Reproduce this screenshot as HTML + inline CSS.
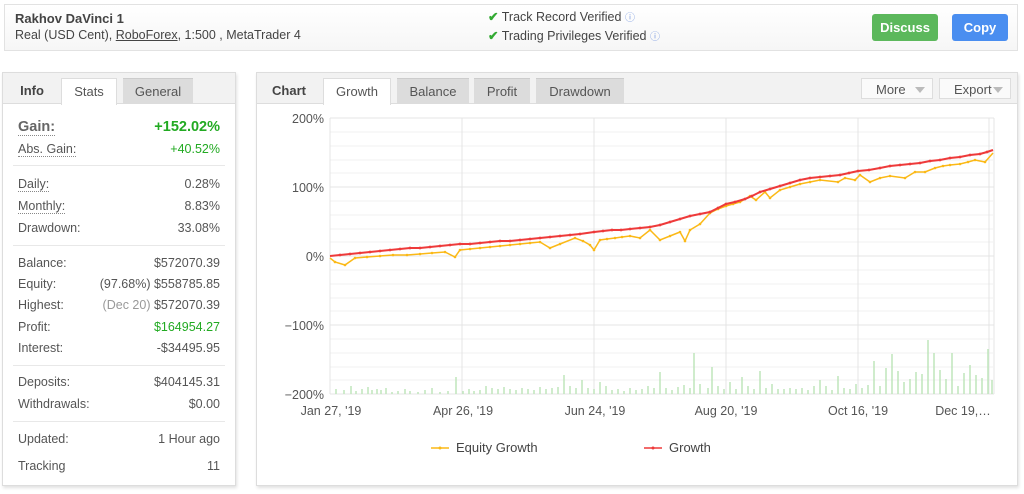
<!DOCTYPE html>
<html><head><meta charset="utf-8"><style>
*{box-sizing:border-box;margin:0;padding:0}
body{width:1024px;height:494px;background:#fff;font-family:"Liberation Sans",sans-serif;color:#555;position:relative;overflow:hidden;font-size:12px}
.abs{position:absolute}
.hdr{left:4px;top:4px;width:1014px;height:47px;border:1px solid #e2e2e2;background:linear-gradient(#fff,#f6f6f6)}
.panel{border:1px solid #ddd;background:#fff;box-shadow:1px 2px 3px rgba(0,0,0,.12)}
.tabbar{position:absolute;left:0;top:0;right:0;height:31px;background:#f2f2f2;border-bottom:1px solid #ddd}
.tab{position:absolute;top:5px;height:26px;line-height:26px;text-align:center;font-size:13px;color:#555}
.tab.on{background:#fff;border:1px solid #ddd;border-bottom:none;height:27px}
.tab.off{background:#dcdcdc;border-top:1px solid #ccc}
.row{position:absolute;left:15px;right:15px;font-size:12.5px;color:#555}
.row .r{position:absolute;right:0;top:0}
.sep{position:absolute;left:10px;right:10px;height:1px;background:#e8e8e8}
.dot{border-bottom:1px dotted #888}
.btn{position:absolute;top:14px;height:27px;line-height:27px;color:#fff;font-weight:bold;font-size:13px;text-align:center;border-radius:3px}
.dd{position:absolute;top:5px;height:21px;line-height:21px;border:1px solid #ddd;background:#fafafa;font-size:13px;color:#555;padding-left:14px}
.dd:after{content:"";position:absolute;right:7px;top:8px;border-left:5px solid transparent;border-right:5px solid transparent;border-top:6px solid #bbb}
</style></head><body>
<div class="abs hdr"></div>
<div class="abs" style="left:15px;top:11px;font-weight:bold;font-size:13px;color:#444">Rakhov DaVinci 1</div>
<div class="abs" style="left:15px;top:28px;font-size:12.5px;color:#444">Real (USD Cent), <u>RoboForex</u>, 1:500 , MetaTrader 4</div>
<div class="abs" style="left:488px;top:9px;font-size:12.5px;color:#444"><span style="color:#3a3;font-weight:bold">✔</span> Track Record Verified <span style="color:#7a9ae0;font-size:10px">ⓘ</span></div>
<div class="abs" style="left:488px;top:28px;font-size:12.5px;color:#444"><span style="color:#3a3;font-weight:bold">✔</span> Trading Privileges Verified <span style="color:#7a9ae0;font-size:10px">ⓘ</span></div>
<div class="btn" style="left:872px;width:66px;background:#5cb85c">Discuss</div>
<div class="btn" style="left:952px;width:56px;background:#4a8ef0">Copy</div>

<div class="abs panel" style="left:2px;top:72px;width:234px;height:414px">
 <div class="tabbar"></div>
 <div class="tab" style="left:4px;width:50px;font-weight:bold;color:#444">Info</div>
 <div class="tab on" style="left:58px;width:56px">Stats</div>
 <div class="tab off" style="left:120px;width:70px">General</div>
 <div class="row" style="top:46px;font-size:14.5px;font-weight:bold;color:#666"><span class="dot">Gain:</span><span class="r" style="color:#2a2">+152.02%</span></div>
 <div class="row" style="top:69px"><span class="dot">Abs. Gain:</span><span class="r" style="color:#2a2">+40.52%</span></div>
 <div class="sep" style="top:92px"></div>
 <div class="row" style="top:104px"><span class="dot">Daily:</span><span class="r">0.28%</span></div>
 <div class="row" style="top:126px"><span class="dot">Monthly:</span><span class="r">8.83%</span></div>
 <div class="row" style="top:148px">Drawdown:<span class="r">33.08%</span></div>
 <div class="sep" style="top:172px"></div>
 <div class="row" style="top:183px">Balance:<span class="r">$572070.39</span></div>
 <div class="row" style="top:204px">Equity:<span class="r">(97.68%) $558785.85</span></div>
 <div class="row" style="top:225px">Highest:<span class="r"><span style="color:#999">(Dec 20)</span> $572070.39</span></div>
 <div class="row" style="top:247px">Profit:<span class="r" style="color:#2a2">$164954.27</span></div>
 <div class="row" style="top:268px">Interest:<span class="r">-$34495.95</span></div>
 <div class="sep" style="top:292px"></div>
 <div class="row" style="top:302px">Deposits:<span class="r">$404145.31</span></div>
 <div class="row" style="top:324px">Withdrawals:<span class="r">$0.00</span></div>
 <div class="sep" style="top:348px"></div>
 <div class="row" style="top:359px">Updated:<span class="r">1 Hour ago</span></div>
 <div class="row" style="top:386px">Tracking<span class="r">11</span></div>
</div>

<div class="abs panel" style="left:256px;top:72px;width:762px;height:414px">
 <div class="tabbar"></div>
 <div class="tab" style="left:4px;width:56px;font-weight:bold;color:#444">Chart</div>
 <div class="tab on" style="left:66px;width:68px">Growth</div>
 <div class="tab off" style="left:140px;width:72px">Balance</div>
 <div class="tab off" style="left:217px;width:56px">Profit</div>
 <div class="tab off" style="left:279px;width:88px">Drawdown</div>
 <div class="dd" style="left:604px;width:72px">More</div>
 <div class="dd" style="left:682px;width:72px">Export</div>
</div>

<svg class="abs" style="left:0;top:0" width="1024" height="494">
<defs>
<marker id="my" markerWidth="3" markerHeight="3" refX="1.5" refY="1.5" markerUnits="userSpaceOnUse"><circle cx="1.5" cy="1.5" r="1.3" fill="#fbb917"/></marker>
<marker id="mr" markerWidth="3" markerHeight="3" refX="1.5" refY="1.5" markerUnits="userSpaceOnUse"><circle cx="1.5" cy="1.5" r="1.4" fill="#ee3a3a"/></marker>
</defs>
<g stroke="#f0f0f0" stroke-width="1">
<line x1="330" y1="132" x2="993" y2="132"/><line x1="330" y1="146" x2="993" y2="146"/><line x1="330" y1="160" x2="993" y2="160"/><line x1="330" y1="173" x2="993" y2="173"/>
<line x1="330" y1="201" x2="993" y2="201"/><line x1="330" y1="215" x2="993" y2="215"/><line x1="330" y1="229" x2="993" y2="229"/><line x1="330" y1="242" x2="993" y2="242"/>
<line x1="330" y1="270" x2="993" y2="270"/><line x1="330" y1="284" x2="993" y2="284"/><line x1="330" y1="298" x2="993" y2="298"/><line x1="330" y1="311" x2="993" y2="311"/>
<line x1="330" y1="339" x2="993" y2="339"/><line x1="330" y1="353" x2="993" y2="353"/><line x1="330" y1="367" x2="993" y2="367"/><line x1="330" y1="380" x2="993" y2="380"/>
</g>
<g stroke="#e4e4e4" stroke-width="1">
<line x1="330" y1="118" x2="994" y2="118"/><line x1="330" y1="187" x2="994" y2="187"/><line x1="330" y1="256" x2="994" y2="256"/><line x1="330" y1="325" x2="994" y2="325"/><line x1="330" y1="394" x2="994" y2="394"/>
<line x1="330" y1="118" x2="330" y2="394"/><line x1="462" y1="118" x2="462" y2="394"/><line x1="594" y1="118" x2="594" y2="394"/><line x1="726" y1="118" x2="726" y2="394"/><line x1="858" y1="118" x2="858" y2="394"/><line x1="989" y1="118" x2="989" y2="394"/><line x1="994" y1="118" x2="994" y2="394"/>
</g>
<g stroke="#bfe6bb" stroke-width="1.5">
<path d="M336 394v-5M344 394v-4M351 394v-8M356 394v-3M362 394v-5M368 394v-7M372 394v-4M377 394v-5M381 394v-4M386 394v-6M392 394v-2M398 394v-3M405 394v-5M410 394v-3M418 394v-2M425 394v-4M432 394v-6M440 394v-2M448 394v-3M456 394v-17M463 394v-3M469 394v-5M474 394v-3M480 394v-4M486 394v-8M492 394v-6M498 394v-5M504 394v-7M510 394v-5M516 394v-4M522 394v-6M528 394v-5M534 394v-4M540 394v-7M546 394v-5M552 394v-6M558 394v-7M564 394v-19M570 394v-8M576 394v-6M582 394v-14M588 394v-6M594 394v-5M600 394v-12M606 394v-8M612 394v-4M618 394v-5M624 394v-3M630 394v-6M636 394v-4M642 394v-5M648 394v-8M654 394v-6M660 394v-22M666 394v-6M672 394v-4M678 394v-7M684 394v-9M690 394v-6M694 394v-41M700 394v-10M708 394v-6M712 394v-27M718 394v-8M724 394v-5M730 394v-12M736 394v-5M742 394v-17M748 394v-8M754 394v-5M760 394v-23M766 394v-6M772 394v-10M778 394v-5M784 394v-5M790 394v-6M796 394v-5M802 394v-6M808 394v-4M814 394v-8M820 394v-14M826 394v-8M832 394v-4M838 394v-18M844 394v-6M850 394v-5M856 394v-10M862 394v-6M868 394v-9M874 394v-33M880 394v-8M886 394v-26M892 394v-40M898 394v-23M904 394v-12M910 394v-15M916 394v-22M922 394v-20M928 394v-54M934 394v-41M940 394v-24M946 394v-15M952 394v-41M958 394v-8M964 394v-21M970 394v-29M976 394v-19M982 394v-16M988 394v-45M992 394v-14"/>
</g>
<polyline fill="none" stroke="#fbb917" stroke-width="1.5" marker-mid="url(#my)" points="330,258 335,262 345,265 355,258 367,257 380,256 393,255 407,255 420,254 432,253 445,252 455,257 460,250 470,249 480,248 490,247 500,246 510,245 520,244 530,243 540,242 550,248 560,244 575,238 583,241 590,245 594,250 600,240 607,239 615,238 622,237 630,236 640,238 650,230 660,240 670,236 680,232 685,241 690,230 700,224 710,213 718,209 726,206 733,204 740,202 750,196 756,200 765,192 770,198 780,190 790,187 800,184 810,182 820,180 838,182 845,178 855,180 860,175 870,182 880,178 890,176 905,178 915,172 925,172 935,168 943,166 950,165 960,164 968,162 975,160 985,162 993,153"/>
<polyline fill="none" stroke="#ee3a3a" stroke-width="2" marker-mid="url(#mr)" points="330,256 340,255 350,254 360,253 370,252 380,251 390,250 400,249 410,248 420,248 430,247 440,246 450,245 460,244 470,244 480,243 490,242 500,241 510,241 520,240 530,239 540,238 550,237 560,236 570,235 580,234 594,232 603,231 612,230 621,230 630,229 640,228 650,227 660,225 670,222 680,219 690,216 700,214 710,212 718,208 726,204 735,202 745,199 752,196 760,192 770,189 780,186 790,183 800,180 810,178 820,177 830,176 840,175 849,173 858,171 869,170 880,168 890,166 900,165 910,164 920,163 930,161 940,160 950,158 960,157 970,155 980,154 987,152 993,150"/>
<g font-family="Liberation Sans,sans-serif" font-size="12.5" fill="#555" text-anchor="end">
<text x="324" y="123">200%</text><text x="324" y="192">100%</text><text x="324" y="261">0%</text><text x="324" y="330">−100%</text><text x="324" y="399">−200%</text>
</g>
<g font-family="Liberation Sans,sans-serif" font-size="12.5" fill="#555" text-anchor="middle">
<text x="331" y="415">Jan 27, '19</text><text x="463" y="415">Apr 26, '19</text><text x="595" y="415">Jun 24, '19</text><text x="726" y="415">Aug 20, '19</text><text x="858" y="415">Oct 16, '19</text><text x="963" y="415">Dec 19,…</text>
</g>
<line x1="431" y1="448" x2="449" y2="448" stroke="#fbb917" stroke-width="1.5"/><circle cx="440" cy="448" r="1.5" fill="#fbb917"/>
<text x="456" y="452" font-family="Liberation Sans,sans-serif" font-size="13" fill="#444">Equity Growth</text>
<line x1="644" y1="448" x2="662" y2="448" stroke="#ee3a3a" stroke-width="1.5"/><circle cx="653" cy="448" r="1.5" fill="#ee3a3a"/>
<text x="669" y="452" font-family="Liberation Sans,sans-serif" font-size="13" fill="#444">Growth</text>
</svg>
</body></html>
